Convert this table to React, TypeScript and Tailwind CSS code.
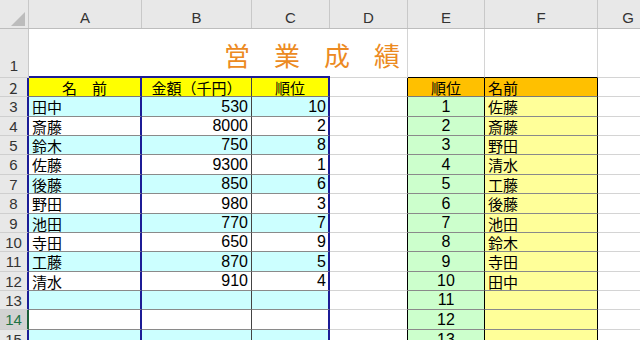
const BLUE = "border-r-[#1c1c96]";

const left = [
  ["田中", "530", "10"],
  ["斎藤", "8000", "2"],
  ["鈴木", "750", "8"],
  ["佐藤", "9300", "1"],
  ["後藤", "850", "6"],
  ["野田", "980", "3"],
  ["池田", "770", "7"],
  ["寺田", "650", "9"],
  ["工藤", "870", "5"],
  ["清水", "910", "4"],
  ["", "", ""],
  ["", "", ""],
  ["", "", ""],
];

const right = ["佐藤", "斎藤", "野田", "清水", "工藤", "後藤", "池田", "鈴木", "寺田", "田中", "", "", ""];

// row heights for rows 3..15 (Excel rounds 19.4px rows)
const heights = ["h-[20px]", "h-[19px]", "h-[19px]", "h-[20px]", "h-[19px]", "h-[20px]", "h-[19px]", "h-[19px]", "h-[20px]", "h-[19px]", "h-[19px]", "h-[20px]", "h-[20px]"];

const RowHead = ({ n, selected }: { n: string; selected?: boolean }) => (
  <div
    className={`w-[29px] shrink-0 flex items-center justify-center border-b border-b-[#cfcfcf] border-r-2 text-[15px] ${
      selected ? "bg-[#d2d2d2] text-[#217346] border-r-[#1d5e38]" : `bg-[#e8e8e8] text-[#333] ${BLUE}`
    }`}
  >
    {n}
  </div>
);

export default function App() {
  return (
    <div className="w-[640px] h-[340px] overflow-hidden bg-white font-['Liberation_Sans','Noto_Sans_CJK_JP',sans-serif] text-[16px] text-black leading-none">
      {/* column headers */}
      <div className="flex h-[29px] bg-[#e8e8e8] border-b border-b-[#bdbdbd] text-[15px] text-[#333]">
        <div className="w-[29px] shrink-0 border-r border-r-[#c8c8c8] flex items-end justify-end pr-[3px] pb-[2px]">
          <svg width="14" height="14" viewBox="0 0 14 14">
            <polygon points="14,0 14,14 0,14" fill="#bcbcbc" />
          </svg>
        </div>
        {[
          ["A", "w-[113px]"],
          ["B", "w-[110px]"],
          ["C", "w-[78px]"],
          ["D", "w-[78px]"],
          ["E", "w-[77px]"],
          ["F", "w-[113px]"],
        ].map(([l, w]) => (
          <div key={l} className={`${w} shrink-0 border-r border-r-[#c8c8c8] flex items-end justify-center pb-[3px]`}>
            {l}
          </div>
        ))}
        <div className="w-[60px] shrink-0 flex items-end justify-center pb-[3px]">G</div>
      </div>

      {/* row 1 with title */}
      <div className="relative flex h-[49px]">
        <div className="w-[29px] shrink-0 bg-[#e8e8e8] border-r border-r-[#c8c8c8] border-b border-b-[#cfcfcf] flex items-end justify-center pb-[4px] text-[15px] text-[#333]">
          1
        </div>
        <div className="w-[113px] shrink-0 border-b-2 border-b-[#1c1c96]" />
        <div className="w-[110px] shrink-0 border-b-2 border-b-[#1c1c96]" />
        <div className="w-[78px] shrink-0 border-b-2 border-b-[#1c1c96]" />
        <div className="w-[78px] shrink-0 border-b border-b-[#d4d4d4] border-r border-r-[#d4d4d4]" />
        <div className="w-[77px] shrink-0 border-b border-b-black border-r border-r-[#d4d4d4]" />
        <div className="w-[113px] shrink-0 border-b border-b-black border-r border-r-[#d4d4d4]" />
        <div className="flex-1 border-b border-b-[#d4d4d4]" />
        <div className="absolute left-[224px] top-[13px] font-['Noto_Sans_CJK_JP',sans-serif] text-[26px] tracking-[24px] text-[#ec8a22]">
          営業成績
        </div>
      </div>

      {/* row 2 header */}
      <div className="flex h-[19px] font-['Noto_Sans_CJK_JP',sans-serif] text-[15px]">
        <RowHead n="2" />
        <div className={`w-[113px] shrink-0 bg-[#ffff00] border-r-2 ${BLUE} border-b border-b-[#7a7a7a] flex items-center justify-center`}>
          名　前
        </div>
        <div className="w-[110px] shrink-0 bg-[#ffff00] border-r border-r-[#444] border-b border-b-[#7a7a7a] flex items-center justify-center">
          金額（千円）
        </div>
        <div className={`w-[78px] shrink-0 bg-[#ffff00] border-r-2 ${BLUE} border-b border-b-[#7a7a7a] flex items-center justify-center`}>
          順位
        </div>
        <div className="w-[78px] shrink-0 border-r border-r-black border-b border-b-[#d4d4d4]" />
        <div className="w-[77px] shrink-0 bg-[#ffc000] border-r border-r-black border-b border-b-[#7a7a7a] flex items-center justify-center">
          順位
        </div>
        <div className="w-[113px] shrink-0 bg-[#ffc000] border-r border-r-black border-b border-b-[#7a7a7a] flex items-center pl-[3px]">
          名前
        </div>
        <div className="flex-1 border-b border-b-[#d4d4d4]" />
      </div>

      {/* data rows */}
      {left.map(([name, amount, rank], i) => {
        const cyan = i % 2 === 0;
        const bg = cyan ? "bg-[#ccffff]" : "bg-white";
        return (
          <div key={i} className={`flex ${heights[i]}`}>
            <RowHead n={String(i + 3)} selected={i === 11} />
            <div className={`w-[113px] shrink-0 ${bg} border-r-2 ${BLUE} border-b border-b-[#8a8a8a] flex items-center pl-[3px] font-['Noto_Sans_CJK_JP',sans-serif] text-[15px]`}>
              {name}
            </div>
            <div className={`w-[110px] shrink-0 ${bg} border-r border-r-[#444] border-b border-b-[#8a8a8a] flex items-center justify-end pr-[3px]`}>
              {amount}
            </div>
            <div className={`w-[78px] shrink-0 ${bg} border-r-2 ${BLUE} border-b border-b-[#8a8a8a] flex items-center justify-end pr-[2px]`}>
              {rank}
            </div>
            <div className="w-[78px] shrink-0 border-r border-r-black border-b border-b-[#d4d4d4]" />
            <div className="w-[77px] shrink-0 bg-[#ccffcc] border-r border-r-black border-b border-b-[#8a8a8a] flex items-center justify-center">
              {i + 1}
            </div>
            <div className="w-[113px] shrink-0 bg-[#ffff99] border-r border-r-black border-b border-b-[#8a8a8a] flex items-center pl-[3px] font-['Noto_Sans_CJK_JP',sans-serif] text-[15px]">
              {right[i]}
            </div>
            <div className="flex-1 border-b border-b-[#d4d4d4]" />
          </div>
        );
      })}
    </div>
  );
}
